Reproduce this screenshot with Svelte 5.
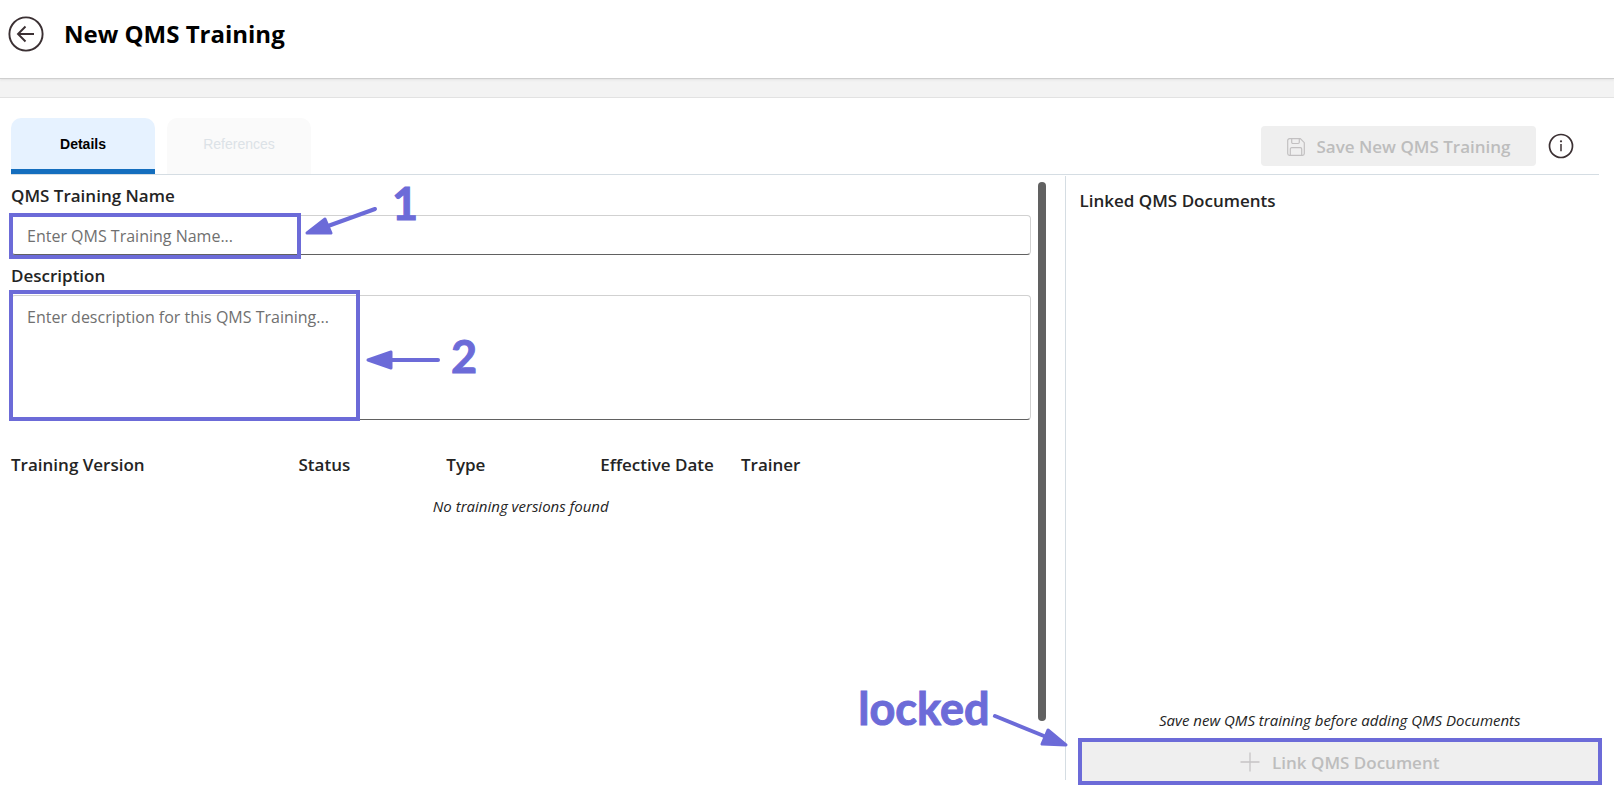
<script>
  let name = $state('');
  let description = $state('');
  const columns = ['Training Version', 'Status', 'Type', 'Effective Date', 'Trainer'];
</script>

<div class="page">
  <header class="topbar">
    <button class="round back" aria-label="Back">
      <svg width="36" height="36" viewBox="0 0 36 36" fill="none" stroke="#3b3033" stroke-width="1.9">
        <circle cx="18" cy="18" r="16.6" />
        <path d="M26 18H10M17.500 10.500L10 18l7.500 7.500" />
      </svg>
    </button>
    <h1>New QMS Training</h1>
  </header>

  <main class="panel">
    <div class="toolbar">
      <nav class="tabs">
        <button class="tab active">Details</button>
        <button class="tab" disabled>References</button>
      </nav>
      <div class="actions">
        <button class="disabled-button save" disabled>
          <svg width="18" height="18" viewBox="0 0 18 18" fill="none" stroke="#c2c0c1" stroke-width="1.200">
            <path d="M2.500.7h10.800l4 4v10.800a1.800 1.800 0 0 1-1.800 1.800h-13A1.800 1.800 0 0 1 .7 15.500v-13A1.800 1.800 0 0 1 2.500.7z" />
            <path d="M4.700.7v3.600a1.200 1.200 0 0 0 1.200 1.200h5.200a1.200 1.200 0 0 0 1.200-1.200V.7M3.300 17.300V11a1.300 1.300 0 0 1 1.300-1.300h8.800a1.300 1.300 0 0 1 1.300 1.300v6.300" />
          </svg>
          <span>Save New QMS Training</span>
        </button>
        <button class="round" aria-label="Information">
          <svg width="26" height="26" viewBox="0 0 26 26" fill="none" stroke="#3b3033" stroke-width="1.700">
            <circle cx="13" cy="13" r="11.500" />
            <path d="M13 11v7.200" stroke-width="1.500" />
            <circle cx="13" cy="8.300" r="1.100" fill="#3b3033" stroke="none" />
          </svg>
        </button>
      </div>
    </div>

    <div class="content">
      <section class="form">
        <label for="training-name">QMS Training Name</label>
        <div class="field">
          <input id="training-name" type="text" placeholder="Enter QMS Training Name..." bind:value={name} />
          <div class="mark mark-name"></div>
        </div>
        <label for="training-description">Description</label>
        <div class="field">
          <textarea id="training-description" placeholder="Enter description for this QMS Training..." bind:value={description}></textarea>
          <div class="mark mark-description"></div>
        </div>
        <table>
          <thead>
            <tr>
              {#each columns as column}
                <th scope="col">{column}</th>
              {/each}
            </tr>
          </thead>
          <tbody>
            <tr><td colspan="5">No training versions found</td></tr>
          </tbody>
        </table>
      </section>
      <div class="scrollbar"></div>
      <aside class="linked">
        <h2>Linked QMS Documents</h2>
        <p>Save new QMS training before adding QMS Documents</p>
        <div class="link-wrap">
          <button class="disabled-button link" disabled>
            <svg width="20" height="20" viewBox="0 0 20 20" fill="none" stroke="#c6c4c5" stroke-width="1.300">
              <path d="M10 .5v19M.5 10h19" />
            </svg>
            <span>Link QMS Document</span>
          </button>
          <div class="mark mark-link"></div>
          <div class="callout locked">
            <span>locked</span>
            <svg width="80" height="40" viewBox="0 0 80 40">
              <path class="shaft" d="M5 6L54 26" />
              <path class="head" d="M76 35L58 20L52 34z" />
            </svg>
          </div>
        </div>
      </aside>

      <div class="callout one">
        <svg width="80" height="34" viewBox="0 0 80 34">
          <path class="shaft" d="M73 5L26 22" />
          <path class="head" d="M5 29L23 15L29 29z" />
        </svg>
        <span>1</span>
      </div>
      <div class="callout two">
        <svg width="80" height="24" viewBox="0 0 80 24">
          <path class="shaft" d="M75 12H26" />
          <path class="head" d="M5 12L28 4V20z" />
        </svg>
        <span>2</span>
      </div>
    </div>
  </main>
</div>

<style>
  :global(body) {
    margin: 0;
    background: #f3f3f3;
  }
  .page {
    display: flex;
    flex-direction: column;
    gap: 18px;
    min-height: 100vh;
    box-sizing: border-box;
    font-family: "Open Sans", "Noto Sans", sans-serif;
    color: #242424;
  }
  .page * {
    box-sizing: border-box;
  }
  button {
    font: inherit;
    border: 0;
    padding: 0;
  }
  svg {
    display: block;
    flex: none;
  }
  .topbar {
    display: flex;
    align-items: center;
    gap: 20px;
    height: 79px;
    padding: 0 8px 11px;
    background: #fff;
    border-bottom: 1px solid #cfcfcf;
    box-shadow: 0 1px 2px #e2e2e2;
  }
  h1 {
    margin: 0;
    font-size: 24px;
    line-height: 32px;
    font-weight: 700;
    color: #000;
  }
  .round {
    background: none;
    border-radius: 50%;
  }
  .panel {
    flex: 1;
    display: flex;
    flex-direction: column;
    padding: 20px 14px 7px 11px;
    background: #fff;
    border-top: 1px solid #e2e2e2;
  }
  .toolbar {
    display: flex;
    justify-content: space-between;
    height: 57px;
    margin-right: 1px;
    border-bottom: 1px solid #d5dde3;
  }
  .tabs {
    display: flex;
    gap: 12px;
  }
  .tab {
    width: 144px;
    height: 56px;
    padding-bottom: 4px;
    border-radius: 10px 10px 0 0;
    background: #fafafa;
    color: #dce2e7;
    font-family: "Liberation Sans", Arial, sans-serif;
    font-size: 14px;
  }
  .tab.active {
    padding-bottom: 0;
    border-bottom: 5px solid #146ebe;
    background: #e6f2ff;
    color: #000;
    font-weight: 700;
  }
  .actions {
    display: flex;
    align-items: center;
    gap: 12px;
    padding-right: 25px;
  }
  .disabled-button {
    display: flex;
    align-items: center;
    justify-content: center;
    gap: 12px;
    padding-top: 1px;
    border-radius: 4px;
    background: #efefef;
    color: #bdbdbd;
    font-size: 17px;
    font-weight: 600;
  }
  .save {
    width: 275px;
    height: 40px;
  }
  .content {
    position: relative;
    flex: 1;
    display: flex;
  }
  .form {
    flex: 1;
    padding-top: 9px;
  }
  label,
  h2,
  th {
    display: block;
    margin: 0;
    font-size: 17px;
    line-height: 24px;
    font-weight: 600;
  }
  label {
    margin-bottom: 7px;
  }
  .field {
    position: relative;
    margin-bottom: 9px;
  }
  input,
  textarea {
    display: block;
    width: 100%;
    height: 40px;
    margin: 0;
    padding: 1px 15px 0;
    border: 1px solid #d1d1d1;
    border-bottom-color: #616161;
    border-radius: 4px;
    outline: 0;
    background: #fff;
    font: inherit;
    font-size: 16px;
    line-height: 24px;
    resize: none;
  }
  textarea {
    height: 125px;
    padding: 9px 15px;
  }
  ::placeholder {
    color: #707070;
    opacity: 1;
  }
  .mark {
    position: absolute;
    border: 4px solid #6c6bd8;
    pointer-events: none;
  }
  .mark-name {
    left: -2px;
    top: -2px;
    width: 292px;
    height: 46px;
  }
  .mark-description {
    left: -2px;
    top: -5px;
    width: 351px;
    height: 131px;
  }
  .mark-link {
    inset: -2px;
  }
  table {
    width: 100%;
    margin-top: 33px;
    border-collapse: collapse;
    table-layout: fixed;
  }
  th {
    display: table-cell;
    padding: 0;
    text-align: left;
  }
  th:nth-child(1) { width: 28.2%; }
  th:nth-child(2) { width: 14.5%; }
  th:nth-child(3) { width: 15.1%; }
  th:nth-child(4) { width: 13.8%; }
  td,
  p {
    font-size: 15px;
    line-height: 20px;
    font-style: italic;
    text-align: center;
  }
  td {
    padding: 19px 0;
  }
  .scrollbar {
    width: 8px;
    margin: 7px 19px 59px 7px;
    border-radius: 4px;
    background: #616161;
  }
  .linked {
    display: flex;
    flex-direction: column;
    width: 33.7%;
    margin-top: 1px;
    padding: 13px 0 0 14px;
    border-left: 1px solid #d5dde3;
  }
  p {
    margin: auto 0 10px;
  }
  .link-wrap {
    position: relative;
    margin-bottom: -3px;
  }
  .link {
    width: 100%;
    height: 43px;
  }
  .callout {
    position: absolute;
    display: flex;
    color: #6c6bd8;
    font-family: Lato, sans-serif;
    font-size: 45px;
    line-height: 48px;
    font-weight: 700;
    -webkit-text-stroke: 1px #6c6bd8;
    pointer-events: none;
  }
  .one {
    left: 291px;
    top: 4px;
    gap: 10px;
  }
  .one svg {
    margin-top: 25px;
  }
  .two {
    left: 352px;
    top: 157px;
    gap: 8px;
  }
  .two svg {
    margin-top: 16px;
  }
  .locked {
    right: 100%;
    top: -56px;
    margin-right: 10px;
  }
  .locked svg {
    margin-top: 26px;
  }
  .shaft {
    fill: none;
    stroke: #6c6bd8;
    stroke-width: 4;
    stroke-linecap: round;
  }
  .head {
    fill: #6c6bd8;
    stroke: #6c6bd8;
    stroke-width: 3;
    stroke-linejoin: round;
  }
</style>
